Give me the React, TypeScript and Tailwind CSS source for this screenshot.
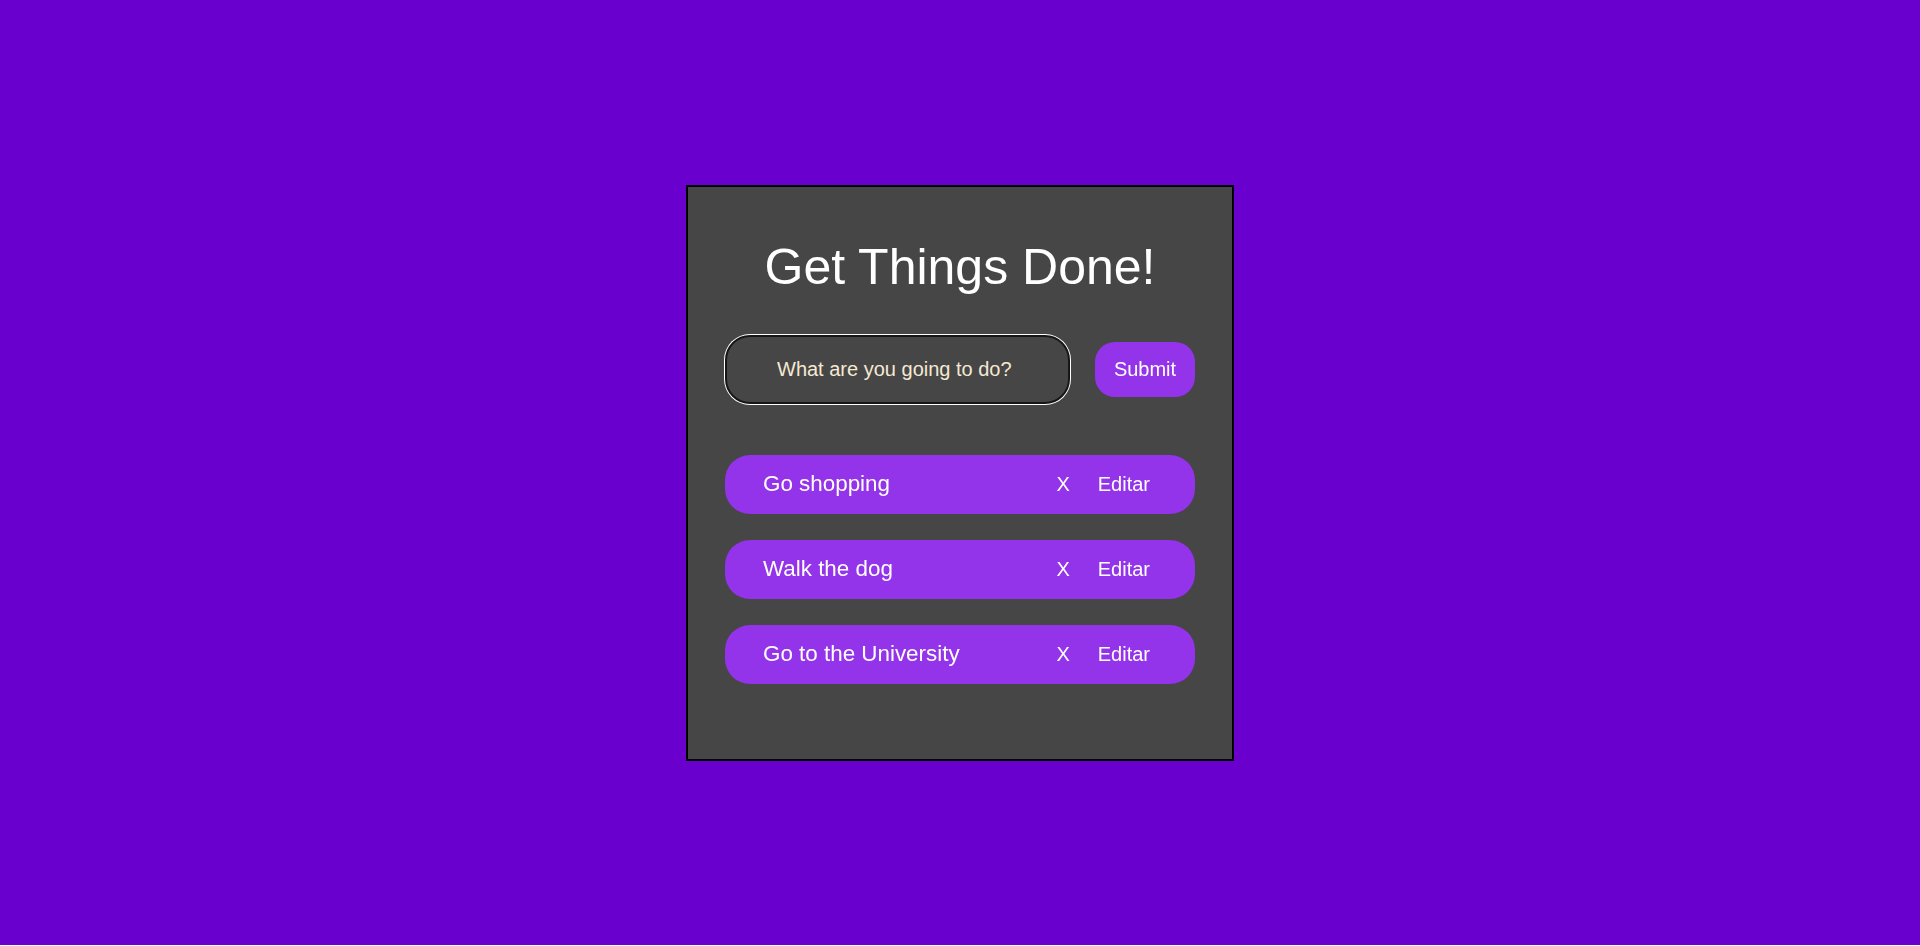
const todos = ["Go shopping", "Walk the dog", "Go to the University"];

const TodoItem = ({ task }: { task: string }) => {
  return (
    <div className="flex h-[59px] items-center justify-between rounded-[25px] bg-[#9333ea] pl-[38px] pr-[45px] text-white">
      <p className="text-[22.4px]">{task}</p>
      <div className="flex items-center gap-[28px] text-[20px]">
        <span>X</span>
        <span>Editar</span>
      </div>
    </div>
  );
};

export default function App() {
  return (
    <div className="flex h-[945px] items-center justify-center bg-[#6a00cd] font-['Liberation_Sans',Arial,sans-serif]">
      <div className="flex h-[576px] w-[548px] flex-col border-2 border-black bg-[#464646] px-[37px] pt-[51px]">
        <h1 className="text-center text-[50px] leading-[58px] text-white">Get Things Done!</h1>

        <form className="mt-[39px] flex items-center gap-[25px]" onSubmit={(e) => e.preventDefault()}>
          <input
            autoFocus
            type="text"
            placeholder="What are you going to do?"
            className="h-[69px] w-[345px] rounded-[25px] border-2 border-[#161616] bg-[#464646] pl-[50px] text-[20px] text-[#f5e9d3] caret-[#f5e9d3] shadow-[0_0_0_1px_#ffffff] outline-none placeholder:text-[#f5e9d3]"
          />
          <button className="h-[55px] w-[100px] rounded-[20px] bg-[#9333ea] text-[20px] text-white">Submit</button>
        </form>

        <div className="mt-[51px] flex flex-col gap-[26px]">
          {todos.map((t) => (
            <TodoItem key={t} task={t} />
          ))}
        </div>
      </div>
    </div>
  );
}
